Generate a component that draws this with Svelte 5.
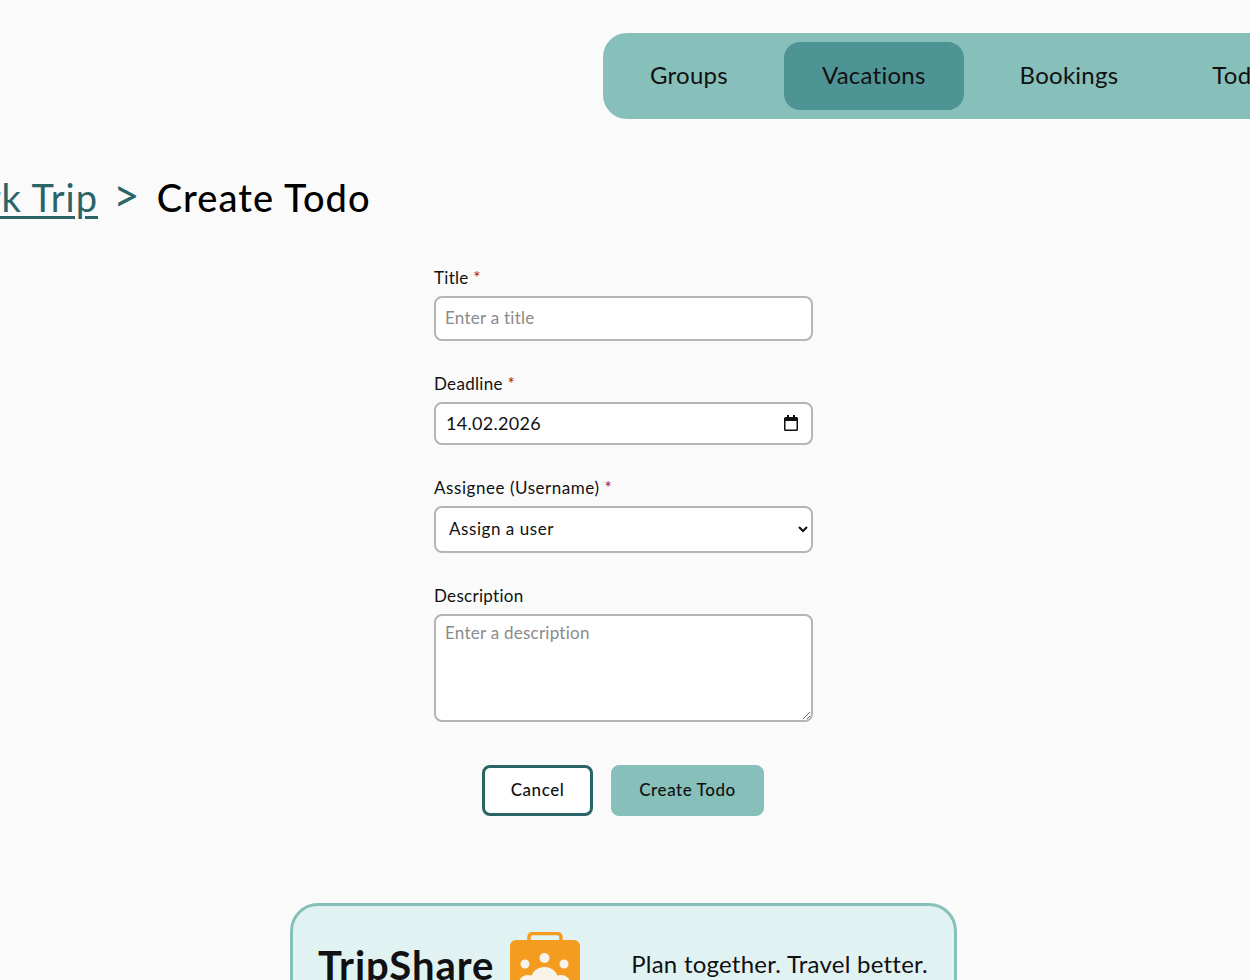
<script lang="ts">
  const navItems = [
    { label: "Groups", active: false },
    { label: "Vacations", active: true },
    { label: "Bookings", active: false },
    { label: "Todos", active: false },
  ];
</script>

<div class="page">
  <header class="topbar">
    <nav class="nav">
      {#each navItems as item}
        <a class="nav-item" class:active={item.active} href="#top">{item.label}</a>
      {/each}
    </nav>
  </header>

  <div class="crumbs">
    <a class="crumb-link" href="#top">Work Trip</a>
    <span class="crumb-sep">&gt;</span>
    <h1 class="crumb-current">Create Todo</h1>
  </div>

  <form class="form">
    <div class="field title-field">
      <label for="title">Title <span class="req">*</span></label>
      <input id="title" type="text" placeholder="Enter a title" />
    </div>
    <div class="field deadline-field">
      <label for="deadline">Deadline <span class="req">*</span></label>
      <div class="date-wrap">
        <input id="deadline" class="date" type="text" value="14.02.2026" />
        <svg class="cal" width="14" height="16" viewBox="0 0 14 16" aria-hidden="true">
          <path d="M3 0h2v2h4V0h2v2h1.5A1.5 1.5 0 0 1 14 3.5v11a1.5 1.5 0 0 1-1.5 1.5h-11A1.5 1.5 0 0 1 0 14.5v-11A1.5 1.5 0 0 1 1.5 2H3zM1.5 6v8.5h11V6z" fill="#111" />
        </svg>
      </div>
    </div>
    <div class="field assignee-field">
      <label for="assignee">Assignee (Username) <span class="req">*</span></label>
      <select id="assignee">
        <option>Assign a user</option>
      </select>
    </div>
    <div class="field description-field">
      <label for="description">Description</label>
      <textarea id="description" placeholder="Enter a description"></textarea>
    </div>
    <div class="actions">
      <button type="button" class="btn cancel">Cancel</button>
      <button type="submit" class="btn create">Create Todo</button>
    </div>
  </form>

  <footer class="footer">
    <div class="brand">
      <span class="brand-name">TripShare</span>
      <svg class="logo" width="70" height="88" viewBox="0 0 70 88" aria-hidden="true">
        <path d="M19 12V5a3.500 3.500 0 0 1 3.500-3.500h25A3.500 3.500 0 0 1 51 5v7" fill="none" stroke="#f39c1f" stroke-width="3.500" />
        <rect y="8" width="70" height="80" rx="6" fill="#f39c1f" />
        <g fill="#f8f3ea">
          <circle cx="15" cy="32" r="4.500" />
          <circle cx="34.500" cy="26" r="5" />
          <circle cx="54" cy="32" r="4.500" />
          <ellipse cx="18" cy="51" rx="9" ry="8" />
          <ellipse cx="51" cy="51" rx="9" ry="8" />
          <ellipse cx="34.500" cy="49" rx="14" ry="14" />
        </g>
      </svg>
    </div>
    <p class="tagline">Plan together. Travel better.</p>
  </footer>
</div>

<style>
  :global(body) {
    margin: 0;
    background: #fafafa;
    overflow: hidden;
  }

  .page {
    width: 1250px;
    height: 980px;
    overflow: hidden;
    font-family: "Lato", "Open Sans", sans-serif;
    color: #111;
    background: #fafafa;
  }

  .topbar {
    padding: 33px 0 0 603px;
    height: 86px;
  }

  .nav {
    display: flex;
    gap: 18px;
    align-items: center;
    width: 800px;
    height: 86px;
    padding: 0 9px;
    box-sizing: border-box;
    background: #87bfba;
    border-radius: 24px;
  }

  .nav-item {
    display: flex;
    align-items: center;
    height: 68px;
    padding: 0 38px 3px;
    box-sizing: border-box;
    border-radius: 16px;
    font-size: 24px;
    letter-spacing: 0.25px;
    color: #111;
    text-decoration: none;
  }

  .nav-item.active {
    background: #4f9494;
  }

  .crumbs {
    display: flex;
    align-items: baseline;
    margin: 53px 0 0 -74px;
    height: 54px;
    white-space: nowrap;
  }

  .crumb-link {
    font-size: 38px;
    letter-spacing: 1px;
    color: #2a6467;
    text-decoration: underline;
    text-decoration-thickness: 3px;
    text-underline-offset: 4px;
  }

  .crumb-sep {
    margin: 0 17px 0 15px;
    font-size: 46px;
    line-height: 1;
    color: #2a6467;
  }

  .crumb-current {
    margin: 0;
    font-size: 38px;
    font-weight: 500;
    letter-spacing: 1.1px;
    color: #000;
  }

  .form {
    width: 379px;
    margin: 43px 0 0 434px;
    display: flex;
    flex-direction: column;
  }

  .field {
    display: flex;
    flex-direction: column;
  }

  label {
    height: 27px;
    line-height: 18px;
    font-size: 17px;
    letter-spacing: 0.3px;
  }

  .assignee-field label {
    letter-spacing: 0.55px;
  }

  .req {
    color: #a01818;
  }

  input,
  select,
  textarea {
    width: 100%;
    box-sizing: border-box;
    margin: 0;
    border: 2px solid #b5b5b5;
    border-radius: 8px;
    background: #fff;
    font-family: inherit;
    font-size: 17px;
    letter-spacing: 0.25px;
    color: #111;
    outline: none;
  }

  input {
    padding: 0 9px 2px;
  }

  input::placeholder,
  textarea::placeholder {
    color: #8a8a8a;
  }

  .title-field input {
    height: 45px;
  }

  .deadline-field {
    margin-top: 34px;
  }

  .date-wrap {
    position: relative;
  }

  .date {
    height: 43px;
    padding-left: 10px;
    letter-spacing: 0.3px;
    font-size: 18px;
  }

  .cal {
    position: absolute;
    top: 13px;
    right: 15px;
  }

  .assignee-field {
    margin-top: 34px;
  }

  select {
    height: 47px;
    padding: 0 9px 2px;
    letter-spacing: 0.55px;
  }

  .description-field {
    margin-top: 34px;
  }

  textarea {
    display: block;
    height: 108px;
    padding: 6px 9px;
    resize: vertical;
  }

  .actions {
    display: flex;
    justify-content: center;
    gap: 18px;
    margin-top: 43px;
    padding-right: 1px;
  }

  .btn {
    height: 51px;
    padding: 0 0 2px;
    box-sizing: border-box;
    border-radius: 8px;
    font-family: inherit;
    font-size: 17px;
    font-weight: 500;
    letter-spacing: 0.55px;
    color: #111;
  }

  .cancel {
    width: 111px;
    background: #fff;
    border: 3px solid #2a6467;
  }

  .create {
    width: 153px;
    background: #87bfba;
    border: 1px solid #87bfba;
  }

  .footer {
    display: flex;
    justify-content: space-between;
    box-sizing: border-box;
    width: 667px;
    height: 200px;
    margin: 87px 0 0 290px;
    padding: 26px 26px 0 25px;
    background: #e0f2f1;
    border: 3px solid #87bfba;
    border-radius: 28px;
  }

  .brand {
    display: flex;
    gap: 16px;
    align-items: flex-start;
  }

  .brand-name {
    margin-top: 8px;
    font-size: 40px;
    font-weight: 700;
    letter-spacing: 1px;
    line-height: 50px;
    color: #111;
  }

  .tagline {
    margin: 17px 0 0;
    font-size: 24px;
    letter-spacing: 0.25px;
    line-height: 30px;
    color: #111;
  }
</style>
